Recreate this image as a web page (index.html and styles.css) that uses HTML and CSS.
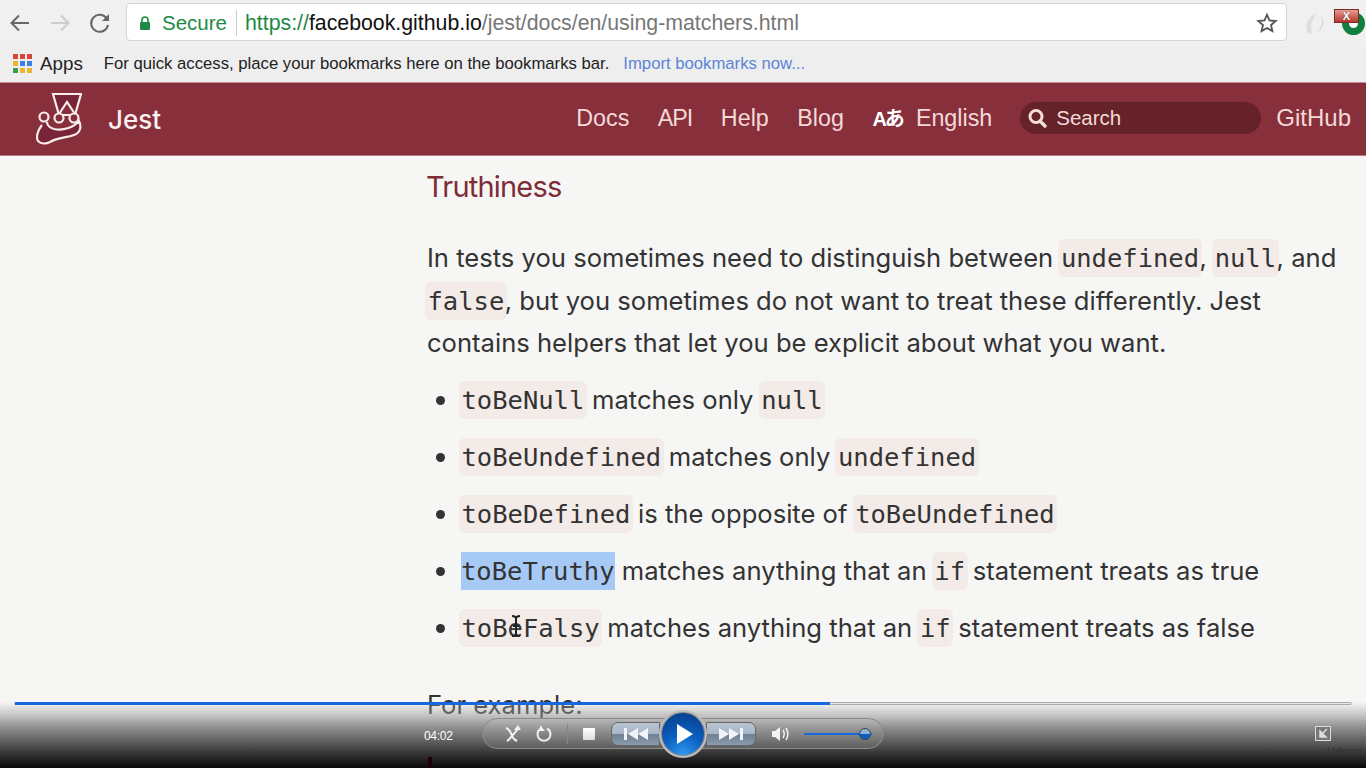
FILE: index.html
```html
<!DOCTYPE html>
<html lang="en">
<head>
    <meta charset="UTF-8">
    <title>Using Matchers - Jest</title>
    <link rel="stylesheet" href="styles.css">
</head>
<body>
    <div class="toolbar">
        <svg class="tool-icon" width="24" height="24" viewBox="0 0 24 24"><path d="M21 12H4M11 4.500L3.500 12l7.500 7.500" fill="none" stroke="#666" stroke-width="2"/></svg>
        <svg class="tool-icon" width="24" height="24" viewBox="0 0 24 24"><path d="M3 12h17M13 4.500l7.500 7.500-7.500 7.500" fill="none" stroke="#ccc" stroke-width="2"/></svg>
        <svg class="tool-icon" width="24" height="24" viewBox="0 0 24 24"><path d="M19 8a8.500 8.500 0 1 0 1 6" fill="none" stroke="#666" stroke-width="2"/><path d="M21 3v7h-7z" fill="#666"/></svg>
        <div class="omnibox">
            <svg class="lock" width="12" height="14" viewBox="0 0 12 14"><path d="M3 6V4a3 3 0 0 1 6 0v2" fill="none" stroke="#1e8a45" stroke-width="1.600"/><rect x="1" y="6" width="10" height="8" rx="1" fill="#1e8a45"/></svg>
            <span class="secure">Secure</span>
            <span class="url"><span class="scheme">https://</span><span class="host">facebook.github.io</span>/jest/docs/en/using-matchers.html</span>
            <svg class="star" width="22" height="22" viewBox="0 0 24 24"><path d="M12 3l2.700 6.200 6.800.6-5.100 4.500 1.500 6.600L12 17.400l-5.900 3.500 1.500-6.600-5.100-4.500 6.800-.6z" fill="none" stroke="#555" stroke-width="2"/></svg>
        </div>
        <div class="extensions">
            <svg width="24" height="26" viewBox="0 0 24 26"><path d="M14 3C7 6 1 12 4 22c1 2 4 2 5 0-2-7 0-12 5-19zM17 4c3 5 2 12-3 18 7-3 9-12 3-18z" fill="#dedede"/></svg>
            <div class="ext-badge"></div>
        </div>
    </div>
    <div class="bookmarks">
        <svg class="apps-icon" width="20" height="20" viewBox="0 0 20 20">
            <rect x="0" y="0" width="5" height="5" fill="#d9453a"/><rect x="7" y="0" width="5" height="5" fill="#d9453a"/><rect x="14" y="0" width="5" height="5" fill="#d9453a"/>
            <rect x="0" y="7" width="5" height="5" fill="#e8b530"/><rect x="7" y="7" width="5" height="5" fill="#3f7fe0"/><rect x="14" y="7" width="5" height="5" fill="#3f7fe0"/>
            <rect x="0" y="14" width="5" height="5" fill="#3a9a50"/><rect x="7" y="14" width="5" height="5" fill="#e8b530"/><rect x="14" y="14" width="5" height="5" fill="#e8b530"/>
        </svg>
        <span class="apps-label">Apps</span>
        <span class="bookmarks-hint">For quick access, place your bookmarks here on the bookmarks bar.</span>
        <span class="bookmarks-import">Import bookmarks now...</span>
    </div>
    <header class="site-nav">
        <svg class="jest-logo" width="46" height="52" viewBox="0 0 46 52">
            <path d="M17 1h28l-6 21H23z" fill="#7a2537" stroke="#f8ecec" stroke-width="2.200"/>
            <path d="M23 21l8-12 8 12" fill="#872f3b" stroke="#f8ecec" stroke-width="2.200"/>
            <path d="M6 32C1 38 0 45 2 48c3 3 8 3 12 1 8-5 16-4 24-7 6-2 8-8 5-14-5 6-15 10-25 8-4-1-7-4-7-7" fill="#7a2537" stroke="#f8ecec" stroke-width="2.200"/>
            <circle cx="8" cy="24" r="4.500" fill="#872f3b" stroke="#f8ecec" stroke-width="2.200"/>
            <circle cx="23" cy="25" r="4.500" fill="#872f3b" stroke="#f8ecec" stroke-width="2.200"/>
            <circle cx="38" cy="25" r="4.500" fill="#872f3b" stroke="#f8ecec" stroke-width="2.200"/>
        </svg>
        <span class="site-title">Jest</span>
        <nav class="site-links">
            <a>Docs</a>
            <a class="api-link">API</a>
            <a>Help</a>
            <a>Blog</a>
            <a class="lang"><span class="lang-glyph">Aあ</span>English</a>
        </nav>
        <div class="search-box">
            <svg width="22" height="22" viewBox="0 0 22 22"><circle cx="10" cy="9.500" r="6" fill="none" stroke="#f3dcdc" stroke-width="3"/><path d="M14 14l5 5" stroke="#f3dcdc" stroke-width="3.500" stroke-linecap="round"/></svg>
            <span>Search</span>
        </div>
        <a class="github-link">GitHub</a>
    </header>
    <main class="doc">
        <h2>Truthiness</h2>
        <p>In tests you sometimes need to distinguish between <code>undefined</code>, <code>null</code>, and <code>false</code>, but you sometimes do not want to treat these differently. Jest contains helpers that let you be explicit about what you want.</p>
        <ul>
            <li><code>toBeNull</code> matches only <code>null</code></li>
            <li><code>toBeUndefined</code> matches only <code>undefined</code></li>
            <li><code>toBeDefined</code> is the opposite of <code>toBeUndefined</code></li>
            <li><code class="selected">toBeTruthy</code> matches anything that an <code>if</code> statement treats as true</li>
            <li><code class="has-cursor">toBeFalsy<svg class="text-cursor" width="12" height="24" viewBox="0 0 12 24"><path d="M2 2c2 0 4 1 4 3v14c0 2-2 3-4 3M10 2c-2 0-4 1-4 3v14c0 2 2 3 4 3M3 12h6" fill="none" stroke="#222" stroke-width="2"/></svg></code> matches anything that an <code>if</code> statement treats as false</li>
        </ul>
        <p class="example">For example:</p>
    </main>
    <div class="player">
        <div class="progress"><div class="progress-done"></div></div>
        <div class="player-row">
            <span class="player-time">04:02</span>
            <div class="controls">
                <svg class="ctl shuffle" width="18" height="18" viewBox="0 0 18 18"><path d="M2 3c4 1 5 5 6 8s3 4 5 5M14 4c-3 3-4 5-6 7s-3 4-5 5" fill="none" stroke="#f2f2f2" stroke-width="2"/><path d="M14 0l-4 5h7z" fill="#f2f2f2"/></svg>
                <svg class="ctl repeat" width="18" height="18" viewBox="0 0 18 18"><path d="M12 3.500a6.500 6.500 0 1 1-6 0" fill="none" stroke="#f2f2f2" stroke-width="2"/><path d="M5 0v6h5z" fill="#f2f2f2"/></svg>
                <div class="ctl-sep"></div>
                <div class="stop"></div>
                <div class="seek seek-prev">
                    <svg width="26" height="14" viewBox="0 0 26 14"><path d="M1 1h3v12H1zM15 1v12L5 7zM25 1v12L15 7z" fill="#f0f4f8"/></svg>
                </div>
                <div class="play-ring">
                    <div class="play-btn"><svg width="18" height="22" viewBox="0 0 18 22"><path d="M1 1l16 10L1 21z" fill="#fff"/></svg></div>
                </div>
                <div class="seek seek-next">
                    <svg width="26" height="14" viewBox="0 0 26 14"><path d="M1 1v12l10-6zM11 1v12l10-6zM22 1h3v12h-3z" fill="#f0f4f8"/></svg>
                </div>
                <svg class="ctl volume" width="20" height="16" viewBox="0 0 20 16"><path d="M1 5h3l5-4v14l-5-4H1z" fill="#f2f2f2"/><path d="M12 4c1.500 2.500 1.500 5.500 0 8M15 2c2.500 4 2.500 8 0 12" fill="none" stroke="#f2f2f2" stroke-width="1.500"/></svg>
                <div class="volume-track"><div class="volume-knob"></div></div>
            </div>
            <svg class="restore" width="16" height="15" viewBox="0 0 16 15"><rect x=".5" y=".5" width="15" height="14" fill="#777" stroke="#ddd"/><path d="M12 3L7 8M5 5v6h6z" fill="#ddd" stroke="#ddd" stroke-width="1.500"/></svg>
            <span class="watermark">Udemy</span>
            <div class="code-peek"></div>
        </div>
    </div>
    <div class="close-x">X</div>
</body>
</html>
```

FILE: styles.css
```css
html, body {
    margin: 0;
    height: 768px;
    overflow: hidden;
}
body {
    font-family: Inter, "Liberation Sans", sans-serif;
    background: #f6f6f5;
    color: #333;
    position: relative;
}
.toolbar {
    height: 46px;
    box-sizing: border-box;
    background: #f0f0f0;
    display: flex;
    align-items: center;
    padding: 0 0 0 8px;
    gap: 4px;
}
.tool-icon {
    margin-right: 12px;
    flex: none;
}
.tool-icon:nth-child(3) {
    margin-right: 3px;
}
.omnibox {
    width: 1161px;
    height: 38px;
    box-sizing: border-box;
    margin: 0 0 2px 7px;
    background: #fff;
    border: 1px solid #d4d4d4;
    border-radius: 4px;
    display: flex;
    align-items: center;
    padding: 1px 8px 0 12px;
    font-size: 21.300px;
    font-family: "Liberation Sans", sans-serif;
    flex: none;
}
.secure {
    color: #1e8a45;
    font-size: 20.500px;
    margin-left: 11px;
    padding-right: 9px;
    border-right: 1px solid #ccc;
    line-height: 26px;
}
.url {
    color: #777;
    margin: 2px 0 0 8px;
    flex: 1;
    white-space: nowrap;
}
.scheme {
    color: #1e8a45;
}
.host {
    color: #111;
}
.extensions {
    display: flex;
    align-items: center;
    gap: 15px;
    margin-left: 12px;
    flex: none;
}
.ext-badge {
    width: 23px;
    height: 23px;
    box-sizing: border-box;
    border-radius: 50%;
    border: 7px solid #11803f;
    background: #fff;
    flex: none;
}
.bookmarks {
    height: 36px;
    box-sizing: border-box;
    background: #eeeeee;
    display: flex;
    align-items: center;
    padding-left: 13px;
    font-family: "Liberation Sans", sans-serif;
    font-size: 16.700px;
    color: #222;
    white-space: nowrap;
}
.apps-label {
    margin-left: 7px;
    font-size: 18.800px;
}
.bookmarks-hint {
    margin-left: 21px;
}
.bookmarks-import {
    margin-left: 14px;
    color: #5b84d8;
}
.site-nav {
    height: 74px;
    box-sizing: border-box;
    background: #872f3b;
    display: flex;
    align-items: center;
    padding: 0 15px 2px 36px;
    color: #f4d9d9;
    font-family: "Liberation Sans", sans-serif;
    font-size: 24px;
    border-top: 1px solid #c98b90;
    border-bottom: 1px solid #b77d82;
}
.jest-logo {
    flex: none;
    margin-top: 2px;
}
.site-title {
    font-family: Inter, sans-serif;
    font-size: 26px;
    font-weight: 500;
    color: #fbf0f0;
    margin: 2px 0 0 26px;
    flex: 1;
}
.site-links {
    display: flex;
    gap: 28.500px;
    font-size: 23.300px;
    line-height: 28px;
}
.api-link {
    letter-spacing: -1px;
}
.lang-glyph {
    font-family: "Liberation Sans", "Noto Sans CJK JP", sans-serif;
    font-weight: bold;
    color: #fff;
    font-size: 20px;
    line-height: 1;
    letter-spacing: -2px;
    margin-right: 13px;
}
.search-box {
    width: 241px;
    height: 32px;
    margin-left: 28px;
    background: #652228;
    border-radius: 16px;
    display: flex;
    align-items: center;
    gap: 8px;
    padding-left: 6px;
    box-sizing: border-box;
    font-size: 20.500px;
}
.github-link {
    margin-left: 15px;
}
.doc {
    margin-left: 427px;
    width: 915px;
    font-size: 25.600px;
    line-height: 42.500px;
    color: #333;
}
.doc h2 {
    margin: 0 0 0 -1px;
    padding-top: 12px;
    font-weight: 400;
    font-size: 29px;
    line-height: 38px;
    color: #7f2c39;
    letter-spacing: -0.8px;
}
.doc p {
    margin: 31px 0 0;
}
.doc ul {
    margin: 14px 0 0;
    padding-left: 34px;
    list-style: none;
}
.doc li {
    height: 42.500px;
    margin-bottom: 14.500px;
}
.doc li::before {
    content: "";
    display: inline-block;
    width: 9px;
    height: 9px;
    margin: 0 16px 0 -25px;
    border-radius: 50%;
    background: #333;
    vertical-align: 4px;
}
.doc code {
    font-family: "DejaVu Sans Mono", monospace;
    font-size: 25.500px;
    line-height: 1;
    background: #f3ebe7;
    border-radius: 6px;
    padding: 4px 2.500px;
    margin: 0 -2px;
}
.doc code.selected {
    background: #a6caf5;
    border-radius: 0;
    padding: 4px 0;
    margin: 0;
}
.has-cursor {
    position: relative;
}
.text-cursor {
    position: absolute;
    left: 51px;
    top: 5px;
}
.doc .example {
    margin-top: 35px;
}
.player {
    position: absolute;
    left: 0;
    right: 0;
    top: 702px;
    height: 66px;
    background: linear-gradient(to bottom, rgba(246,246,245,0.15) 0, rgba(150,150,150,0.55) 14px, #8d8d8d 26px, #333 52px, #0a0a0a 66px);
}
.progress {
    position: absolute;
    left: 14px;
    right: 14px;
    top: 0;
    height: 3px;
    background: #e8e8e8;
    border: 1px solid #aaa;
    box-sizing: border-box;
    border-radius: 2px;
}
.progress-done {
    width: 815px;
    height: 3px;
    margin-top: -1px;
    background: #1668dc;
}
.player-row {
    display: flex;
    align-items: center;
    padding: 16px 0 0 424px;
    position: relative;
}
.player-time {
    color: #fff;
    font-family: "Liberation Sans", sans-serif;
    font-size: 12px;
    letter-spacing: -0.3px;
    width: 58px;
    margin-top: 5px;
}
.controls {
    width: 402px;
    height: 31px;
    box-sizing: border-box;
    border: 1px solid #8a8a8a;
    border-radius: 16px;
    background: rgba(200,200,200,0.18);
    display: flex;
    align-items: center;
    padding-left: 21px;
}
.ctl {
    flex: none;
}
.repeat {
    margin-left: 13px;
}
.ctl-sep {
    width: 1px;
    height: 20px;
    background: #888;
    margin-left: 14px;
}
.stop {
    width: 12px;
    height: 12px;
    margin-left: 15px;
    background: linear-gradient(#fff, #ddd);
    border-radius: 1px;
}
.seek {
    width: 50px;
    height: 24px;
    box-sizing: border-box;
    border: 1px solid #666;
    background: linear-gradient(#b8c4d2 0, #a8b6c6 48%, #6f8196 52%, #8b9aac 100%);
    display: flex;
    align-items: center;
    justify-content: center;
}
.seek-prev {
    width: 49px;
    margin-left: 16px;
    border-radius: 7px 0 0 7px;
}
.seek-next {
    border-radius: 0 7px 7px 0;
}
.play-ring {
    width: 48px;
    height: 48px;
    box-sizing: border-box;
    margin: 0 -1px;
    border-radius: 50%;
    background: #8a8a8a;
    border: 2px solid #bdbdbd;
    padding: 1px;
    z-index: 1;
    flex: none;
}
.play-btn {
    width: 100%;
    height: 100%;
    border-radius: 50%;
    background: radial-gradient(circle at 50% 100%, #2f9bf0 0, #0b5fc0 45%, #073a85 100%);
    display: flex;
    align-items: center;
    justify-content: center;
}
.play-btn svg {
    margin-left: 3px;
}
.volume {
    margin-left: 15px;
}
.volume-track {
    width: 68px;
    height: 2px;
    margin-left: 13px;
    background: #1668dc;
    position: relative;
}
.volume-knob {
    position: absolute;
    right: 1px;
    top: -5px;
    width: 12px;
    height: 12px;
    border-radius: 50%;
    background: linear-gradient(#8fb2d8 0, #8fb2d8 45%, #0b5fc0 55%);
    border: 1px solid #345;
    box-sizing: border-box;
}
.restore {
    position: absolute;
    left: 1315px;
    top: 24px;
}
.watermark {
    position: absolute;
    left: 1327px;
    top: 43px;
    font: 11px "Liberation Sans", sans-serif;
    color: #333;
}
.code-peek {
    position: absolute;
    left: 428px;
    top: 55px;
    width: 4px;
    height: 11px;
    background: #1d0306;
}
.close-x {
    position: absolute;
    left: 1334px;
    top: 9px;
    width: 23px;
    height: 12px;
    background: linear-gradient(#e89a8e, #b5392e);
    border: 1px solid #7a2a2a;
    color: #fff;
    font: bold 11px/12px "Liberation Sans", sans-serif;
    text-shadow: 0 0 1px #333;
    text-align: center;
}
```
